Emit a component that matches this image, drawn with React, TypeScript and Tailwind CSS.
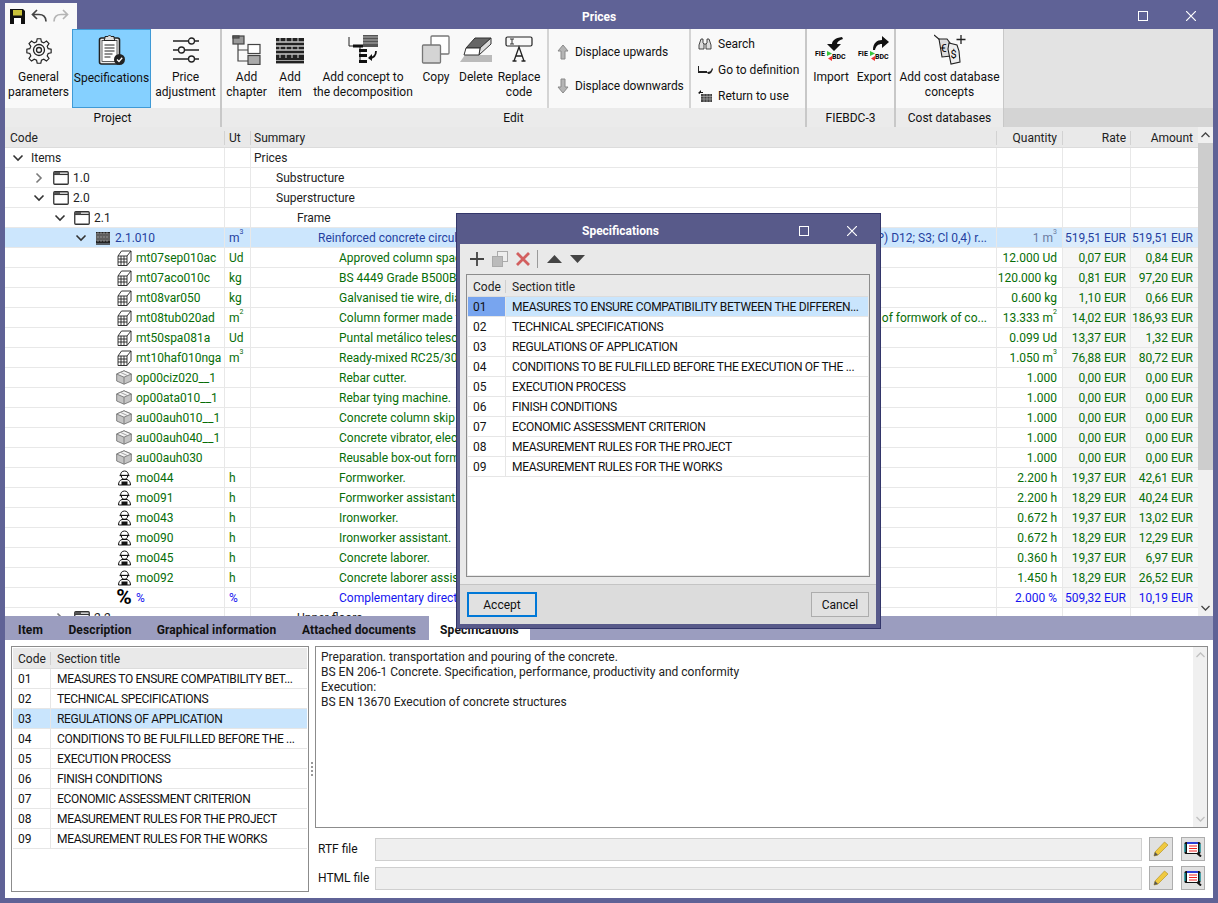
import React from 'react';

const FONT = "font-['Roboto',sans-serif]";

type Row = {
  indent: number;
  arrow?: 'down' | 'right';
  icon: 'folder' | 'wall' | 'mat' | 'box' | 'man' | 'pct' | 'none';
  code: string;
  ut?: string;
  sup?: string;
  summary: string;
  tail?: string;
  sumIndent: number;
  qty?: string;
  qtySup?: string;
  rate?: string;
  amount?: string;
  tone: 'black' | 'green' | 'blue' | 'selected';
};

const rows: Row[] = [
  { indent: 6, arrow: 'down', icon: 'none', code: 'Items', summary: 'Prices', sumIndent: 3, tone: 'black' },
  { indent: 27, arrow: 'right', icon: 'folder', code: '1.0', summary: 'Substructure', sumIndent: 25, tone: 'black' },
  { indent: 27, arrow: 'down', icon: 'folder', code: '2.0', summary: 'Superstructure', sumIndent: 25, tone: 'black' },
  { indent: 48, arrow: 'down', icon: 'folder', code: '2.1', summary: 'Frame', sumIndent: 46, tone: 'black' },
  { indent: 69, arrow: 'down', icon: 'wall', code: '2.1.010', ut: 'm', sup: '3', summary: 'Reinforced concrete circular column, made of concrete RC25/30 (XC1(', tail: 'P) D12; S3; Cl 0,4) r...', sumIndent: 67, qty: '1 m', qtySup: '3', rate: '519,51 EUR', amount: '519,51 EUR', tone: 'selected' },
  { indent: 111, icon: 'mat', code: 'mt07sep010ac', ut: 'Ud', summary: 'Approved column spacer', sumIndent: 88, qty: '12.000 Ud', rate: '0,07 EUR', amount: '0,84 EUR', tone: 'green' },
  { indent: 111, icon: 'mat', code: 'mt07aco010c', ut: 'kg', summary: 'BS 4449 Grade B500B steel', sumIndent: 88, qty: '120.000 kg', rate: '0,81 EUR', amount: '97,20 EUR', tone: 'green' },
  { indent: 111, icon: 'mat', code: 'mt08var050', ut: 'kg', summary: 'Galvanised tie wire, diameter', sumIndent: 88, qty: '0.600 kg', rate: '1,10 EUR', amount: '0,66 EUR', tone: 'green' },
  { indent: 111, icon: 'mat', code: 'mt08tub020ad', ut: 'm', sup: '2', summary: 'Column former made from disposable sheet, for the purposes', tail: 'of formwork of co...', sumIndent: 88, qty: '13.333 m', qtySup: '2', rate: '14,02 EUR', amount: '186,93 EUR', tone: 'green' },
  { indent: 111, icon: 'mat', code: 'mt50spa081a', ut: 'Ud', summary: 'Puntal metálico telescópico', sumIndent: 88, qty: '0.099 Ud', rate: '13,37 EUR', amount: '1,32 EUR', tone: 'green' },
  { indent: 111, icon: 'mat', code: 'mt10haf010nga', ut: 'm', sup: '3', summary: 'Ready-mixed RC25/30 concrete', sumIndent: 88, qty: '1.050 m', qtySup: '3', rate: '76,88 EUR', amount: '80,72 EUR', tone: 'green' },
  { indent: 111, icon: 'box', code: 'op00ciz020__1', summary: 'Rebar cutter.', sumIndent: 88, qty: '1.000', rate: '0,00 EUR', amount: '0,00 EUR', tone: 'green' },
  { indent: 111, icon: 'box', code: 'op00ata010__1', summary: 'Rebar tying machine.', sumIndent: 88, qty: '1.000', rate: '0,00 EUR', amount: '0,00 EUR', tone: 'green' },
  { indent: 111, icon: 'box', code: 'au00auh010__1', summary: 'Concrete column skip', sumIndent: 88, qty: '1.000', rate: '0,00 EUR', amount: '0,00 EUR', tone: 'green' },
  { indent: 111, icon: 'box', code: 'au00auh040__1', summary: 'Concrete vibrator, electric', sumIndent: 88, qty: '1.000', rate: '0,00 EUR', amount: '0,00 EUR', tone: 'green' },
  { indent: 111, icon: 'box', code: 'au00auh030', summary: 'Reusable box-out former', sumIndent: 88, qty: '1.000', rate: '0,00 EUR', amount: '0,00 EUR', tone: 'green' },
  { indent: 111, icon: 'man', code: 'mo044', ut: 'h', summary: 'Formworker.', sumIndent: 88, qty: '2.200 h', rate: '19,37 EUR', amount: '42,61 EUR', tone: 'green' },
  { indent: 111, icon: 'man', code: 'mo091', ut: 'h', summary: 'Formworker assistant.', sumIndent: 88, qty: '2.200 h', rate: '18,29 EUR', amount: '40,24 EUR', tone: 'green' },
  { indent: 111, icon: 'man', code: 'mo043', ut: 'h', summary: 'Ironworker.', sumIndent: 88, qty: '0.672 h', rate: '19,37 EUR', amount: '13,02 EUR', tone: 'green' },
  { indent: 111, icon: 'man', code: 'mo090', ut: 'h', summary: 'Ironworker assistant.', sumIndent: 88, qty: '0.672 h', rate: '18,29 EUR', amount: '12,29 EUR', tone: 'green' },
  { indent: 111, icon: 'man', code: 'mo045', ut: 'h', summary: 'Concrete laborer.', sumIndent: 88, qty: '0.360 h', rate: '19,37 EUR', amount: '6,97 EUR', tone: 'green' },
  { indent: 111, icon: 'man', code: 'mo092', ut: 'h', summary: 'Concrete laborer assistant.', sumIndent: 88, qty: '1.450 h', rate: '18,29 EUR', amount: '26,52 EUR', tone: 'green' },
  { indent: 111, icon: 'pct', code: '%', ut: '%', summary: 'Complementary direct costs', sumIndent: 88, qty: '2.000 %', rate: '509,32 EUR', amount: '10,19 EUR', tone: 'blue' },
  { indent: 48, arrow: 'right', icon: 'folder', code: '2.2', summary: 'Upper floors', sumIndent: 46, tone: 'black' },
];

const sections = [
  ['01', 'MEASURES TO ENSURE COMPATIBILITY BETWEEN THE DIFFEREN...', 'MEASURES TO ENSURE COMPATIBILITY BET...'],
  ['02', 'TECHNICAL SPECIFICATIONS', 'TECHNICAL SPECIFICATIONS'],
  ['03', 'REGULATIONS OF APPLICATION', 'REGULATIONS OF APPLICATION'],
  ['04', 'CONDITIONS TO BE FULFILLED BEFORE THE EXECUTION OF THE ...', 'CONDITIONS TO BE FULFILLED BEFORE THE ...'],
  ['05', 'EXECUTION PROCESS', 'EXECUTION PROCESS'],
  ['06', 'FINISH CONDITIONS', 'FINISH CONDITIONS'],
  ['07', 'ECONOMIC ASSESSMENT CRITERION', 'ECONOMIC ASSESSMENT CRITERION'],
  ['08', 'MEASUREMENT RULES FOR THE PROJECT', 'MEASUREMENT RULES FOR THE PROJECT'],
  ['09', 'MEASUREMENT RULES FOR THE WORKS', 'MEASUREMENT RULES FOR THE WORKS'],
];

const Chevron = ({ dir, light }: { dir: 'down' | 'right'; light?: boolean }) => (
  <svg width="12" height="12" viewBox="0 0 12 12" fill="none" stroke={light ? '#7a7a7a' : '#333'} strokeWidth="1.6">
    {dir === 'down' ? <path d="M1.5 3.5 6 8l4.5-4.5" /> : <path d="M3.5 1.5 8 6l-4.5 4.5" />}
  </svg>
);

const FolderIcon = () => (
  <svg width="16" height="14" viewBox="0 0 16 14" fill="none">
    <rect x="0.75" y="0.75" width="14.5" height="12.5" rx="1" fill="#fff" stroke="#333" strokeWidth="1.3" />
    <path d="M1 3.4h14" stroke="#333" strokeWidth="1.3" />
    <rect x="1" y="1" width="6" height="2.4" fill="#555" />
  </svg>
);

const WallIcon = ({ size = 14 }: { size?: number }) => (
  <svg width={size} height={size} viewBox="0 0 14 14">
    <rect x="0" y="1" width="14" height="11" fill="#222" />
    {[3, 5, 7, 9].map((y) => (
      <path key={y} d="M0 0h14" transform={`translate(0 ${y})`} stroke="#bbb" strokeWidth="0.8" />
    ))}
    {[2, 5, 8, 11].map((x) => (
      <path key={x} d={`M${x} 1v11`} stroke="#bbb" strokeWidth="0.6" strokeDasharray="2 2" />
    ))}
    <path d="M0 13h14" stroke="#222" strokeWidth="1.4" />
  </svg>
);

const MatIcon = () => (
  <svg width="15" height="16" viewBox="0 0 15 16" fill="none" stroke="#222" strokeWidth="0.9">
    <path d="M1 6h9v9.5H1zM1 6l3.5-5H14l-4 5M14 1v9.5l-4 5" fill="#fff" />
    <path d="M4 6v9.5M7 6v9.5M1 9h9M1 12h9" />
  </svg>
);

const BoxIcon = () => (
  <svg width="16" height="15" viewBox="0 0 16 15" stroke="#777" strokeWidth="0.9">
    <path d="M8 .8 15.3 4v7L8 14.2.7 11V4z" fill="#c4c4c4" />
    <path d="M.7 4 8 7.2 15.3 4 8 .8z" fill="#f3f3f3" />
    <path d="M8 7.2v7" />
    <path d="M4.5 2.4 11.5 5.6" stroke="#999" />
  </svg>
);

const ManIcon = () => (
  <svg width="15" height="16" viewBox="0 0 15 16" fill="none" stroke="#111" strokeWidth="1">
    <path d="M3.6 5.5C3.5 2.8 5 1 7.5 1s4 1.8 3.9 4.5z" fill="#fff" />
    <path d="M2.6 5.5h9.8" strokeWidth="1.3" />
    <path d="M4.4 6c0 2 1.3 3.2 3.1 3.2s3.1-1.2 3.1-3.2" fill="#fff" />
    <path d="M1.5 15c0-3 1.5-5 3.5-5.500h5c2 .5 3.500 2.500 3.500 5.500z" fill="#fff" />
    <rect x="4.500" y="11.500" width="6" height="3.500" fill="#111" stroke="none" />
  </svg>
);

const RowIcon = ({ icon }: { icon: Row['icon'] }) => {
  if (icon === 'folder') return <FolderIcon />;
  if (icon === 'wall') return <WallIcon />;
  if (icon === 'mat') return <MatIcon />;
  if (icon === 'box') return <BoxIcon />;
  if (icon === 'man') return <ManIcon />;
  if (icon === 'pct') return <span className="text-[21px] leading-none font-bold text-black">%</span>;
  return null;
};

const RibbonBtn = ({ icon, lines, width, active }: { icon: React.ReactNode; lines: string[]; width: number; active?: boolean }) => (
  <div
    className={`flex flex-col items-center h-[79px] shrink-0 ${active ? 'bg-[#85d0ff] border border-[#3f9ad6]' : ''}`}
    style={{ width }}
  >
    <div className={`h-[40px] flex items-center justify-center ${active ? 'mt-0' : 'mt-px'}`}>{icon}</div>
    <div className={`text-center leading-[15px] whitespace-nowrap text-[#111] ${active ? 'mt-px' : ''}`}>
      {lines.map((l) => (
        <div key={l}>{l}</div>
      ))}
    </div>
  </div>
);

const Group = ({ label, width, children }: { label: string; width: number; children: React.ReactNode }) => (
  <div className="flex flex-col shrink-0 border-r-2 border-[#c8c8c8]" style={{ width }}>
    <div className="h-[79px] bg-[#f9f9f9] flex overflow-hidden">{children}</div>
    <div className="h-[19px] bg-[#ebebeb] flex items-center justify-center text-[#111]">{label}</div>
  </div>
);

const GearIcon = () => (
  <svg width="28" height="28" viewBox="0 0 28 28" fill="none" stroke="#222" strokeWidth="1.3">
    <path d="M12 1.500h4l.7 3.500 2.600 1.100 3-2 2.800 2.800-2 3 1.100 2.600 3.300.7v4l-3.300.7-1.100 2.600 2 3-2.800 2.800-3-2-2.600 1.100-.7 3.300h-4l-.7-3.300-2.600-1.100-3 2-2.800-2.800 2-3-1.100-2.600-3.300-.7v-4l3.300-.7 1.100-2.600-2-3 2.800-2.800 3 2 2.600-1.100z" transform="translate(1.400 1.400) scale(.9)" />
    <circle cx="14" cy="14" r="5.500" />
    <circle cx="14" cy="14" r="2.500" />
  </svg>
);

const ClipboardIcon = () => (
  <svg width="28" height="32" viewBox="0 0 28 32" fill="none" stroke="#222">
    <rect x="1.500" y="4" width="20" height="26" rx="2" fill="#eee" strokeWidth="1.600" />
    <rect x="4" y="6.500" width="15" height="21" fill="#fff" strokeWidth="0.700" />
    <path d="M7 4V2.500h3L11.500 1 13 2.500h3V4l1 2.500H6z" fill="#ddd" strokeWidth="1" />
    <path d="M6.500 11h10M6.500 14h10M6.500 17h10M6.500 20h8M6.500 23h6" strokeWidth="1" />
    <circle cx="21.500" cy="25.500" r="5.500" fill="#222" stroke="none" />
    <path d="m19 25.500 2 2 3.200-3.700" stroke="#fff" strokeWidth="1.300" />
  </svg>
);

const SlidersIcon = () => (
  <svg width="28" height="26" viewBox="0 0 28 26" fill="none" stroke="#222" strokeWidth="1.300">
    <path d="M1 4h15M23 4h4M1 13h5M13 13h14M1 22h15M23 22h4" />
    <circle cx="19.500" cy="4" r="3" />
    <circle cx="9.500" cy="13" r="3" />
    <circle cx="19.500" cy="22" r="3" />
  </svg>
);

const ChapterIcon = () => (
  <svg width="30" height="30" viewBox="0 0 30 30" stroke="#444" strokeWidth="1.200" fill="none">
    <rect x="1" y="1" width="11" height="8" fill="#999" />
    <rect x="1" y="1" width="6" height="2" fill="#666" />
    <path d="M6 9v17h10M6 15h10" />
    <rect x="16" y="9.500" width="12" height="9" fill="#fff" />
    <rect x="16" y="20.500" width="12" height="9" fill="#aaa" />
  </svg>
);

const DecompIcon = () => (
  <svg width="32" height="30" viewBox="0 0 32 30" fill="none">
    <rect x="16" y="0" width="15" height="12" fill="#555" />
    {[2, 5, 8].map((y) => <path key={y} d={`M16 ${y}h15`} stroke="#ccc" strokeWidth="0.800" />)}
    <path d="M2 2v9h6M13 11v17" stroke="#222" strokeWidth="1" />
    <rect x="6" y="9.500" width="10" height="3" fill="#111" />
    <path d="M13 16h3M13 21h3M13 27h3" stroke="#222" />
    <rect x="12" y="14" width="8" height="3" fill="#111" />
    <rect x="12" y="19" width="8" height="3" fill="#111" />
    <rect x="12" y="25" width="8" height="3" fill="#111" />
    <path d="M29 16c0 5-3 7-7 7" stroke="#111" strokeWidth="1.800" />
    <path d="m25 19-4 4 4 3z" fill="#111" />
  </svg>
);

const CopyIcon = () => (
  <svg width="30" height="30" viewBox="0 0 30 30" stroke="#777" strokeWidth="1.300">
    <rect x="10" y="1" width="18" height="18" rx="1" fill="#fff" />
    <rect x="1.500" y="10" width="18" height="18" rx="1" fill="#d4d4d4" />
  </svg>
);

const EraserIcon = () => (
  <svg width="33" height="26" viewBox="0 0 33 26" stroke="#333" strokeWidth="1">
    <path d="M0 25l5-7h27v7z" fill="#bbb" stroke="none" />
    <path d="M6 11 15 1h16L20 11z" fill="#666" />
    <path d="M20 11 31 1v6L19 18z" fill="#ddd" />
    <path d="M6 11h14l-1 7H4z" fill="#fff" />
  </svg>
);

const ReplaceIcon = () => (
  <svg width="28" height="30" viewBox="0 0 28 30" fill="none" stroke="#222">
    <rect x="1" y="2" width="26" height="9" rx="1.500" strokeWidth="1.200" />
    <path d="M5 4h4M5 9h4M7 4v5" strokeWidth="0.900" />
    <path d="m9 26 5-14 5 14M11 21h6M7.500 26h4M16.500 26h4" strokeWidth="1.300" />
  </svg>
);

const FieIcon = ({ up }: { up?: boolean }) => (
  <div className="relative w-[32px] h-[26px]">
    <svg className="absolute left-0 top-0 overflow-visible" width="32" height="26" viewBox="0 0 32 26">
      {up ? (
        <path d="M15 13C15 6 19 3 24 3V-1l7 6-7 6V7c-4 0-6 2-7 6z" fill="#111" />
      ) : (
        <path d="M27 0C20 1 17 4 17 7h-5l7 7 7-7h-4c0-2 2-4 6-5z" fill="#111" />
      )}
      <path d="M12 14l5 2.500-5 2.500z" fill="#39c43c" />
      <path d="M17 19l-4 2.500 4 2.500z" fill="#e33" />
    </svg>
    <span className="absolute left-0 top-[14px] text-[7px] leading-[7px] font-bold text-black">FIE</span>
    <span className="absolute left-[17px] top-[17px] text-[7px] leading-[7px] font-bold text-black">BDC</span>
  </div>
);

const TagsIcon = () => (
  <div className="relative w-[32px] h-[32px]">
    <svg className="absolute left-0 top-0" width="32" height="32" viewBox="0 0 32 32" fill="#fff" stroke="#222" strokeWidth="1.100">
      <path d="M0 1l6 5" />
      <path d="M5 5h8l3 4 1 13-9 1z" fill="#ddd" />
      <path d="M15 9l8 2 2 6 1 11-9 2-3-15z" fill="#eee" />
      <path d="M27 1v9M22.500 5.500h9" strokeWidth="1.300" />
    </svg>
    <span className="absolute left-[7px] top-[9px] text-[11px] leading-none text-black">€</span>
    <span className="absolute left-[17px] top-[15px] text-[11px] leading-none text-black">$</span>
  </div>
);

const SmallArrow = ({ down }: { down?: boolean }) => (
  <svg width="12" height="16" viewBox="0 0 12 16" fill="#b5b5b5" stroke="#8a8a8a">
    {down ? <path d="M4 1h4v8h3l-5 6-5-6h3z" /> : <path d="M4 15h4V7h3L6 1 1 7h3z" />}
  </svg>
);

const Binoculars = () => (
  <svg width="14" height="13" viewBox="0 0 14 13" fill="#ddd" stroke="#333" strokeWidth="0.900">
    <path d="M3 1h2v4l1 1v5H1V7z" />
    <path d="M11 1H9v4L8 6v5h5V7z" />
    <path d="M6 6h2" />
  </svg>
);

const GoDef = () => (
  <svg width="15" height="8" viewBox="0 0 15 8" fill="#222">
    <path d="M0 0h1v5h8v2H0z" />
    <path d="M9 6c3 0 4-1 5-4l1 1c-1 3-2 5-5 5z" />
  </svg>
);

const ReturnUse = () => (
  <svg width="14" height="14" viewBox="0 0 14 14" fill="none">
    <path d="M0 4 3 1v2h2v1H2v1z" fill="#111" />
    <rect x="3" y="5" width="11" height="8" fill="#444" />
    <path d="M3 7.500h11M3 10h11M6 5v8M9 5v8M12 5v8" stroke="#bbb" strokeWidth="0.600" />
  </svg>
);

const toneClass = {
  black: 'text-[#222]',
  green: 'text-[#076d07]',
  blue: 'text-[#1414f0]',
  selected: 'text-[#243f9f]',
};

const SectionTable = ({ which }: { which: 1 | 2 }) => (
  <div className="flex flex-col flex-1 min-w-0 overflow-hidden bg-white">
    <div className="flex h-[21px] pt-px bg-[#e9e9e9] items-center border-b border-[#dcdcdc] shrink-0 text-[#222]">
      <div className="w-[38px] pl-[5px] shrink-0 border-r border-[#cfcfcf] h-[13px] flex items-center">Code</div>
      <div className="pl-[6px]">Section title</div>
    </div>
    {sections.map((s, i) => {
      const selDialog = which === 1 && i === 0;
      const selPane = which === 2 && i === 2;
      return (
        <div key={s[0]} className={`flex h-[20px] border-b border-[#e6e6e6] items-center shrink-0 text-[#111] ${selDialog || selPane ? 'bg-[#c9e5fd]' : ''}`}>
          <div className={`w-[38px] shrink-0 h-full flex items-center pl-[5px] border-r border-[#e6e6e6] ${selDialog ? 'bg-[#78a5ef]' : ''}`}>{s[0]}</div>
          <div className="pl-[6px] whitespace-nowrap tracking-[-0.32px]">{which === 1 ? s[1] : s[2]}</div>
        </div>
      );
    })}
  </div>
);

const PencilBtn = () => (
  <div className="w-[24px] h-[24px] bg-[#e1e1e1] border border-[#adadad] flex items-center justify-center shrink-0">
    <svg width="16" height="16" viewBox="0 0 16 16">
      <path d="M11.500 1 15 4 5 14l-4 1 1-4z" fill="#f0c93f" stroke="#b8962b" strokeWidth="0.700" />
      <path d="M2 11l3 3-4 1z" fill="#555" />
    </svg>
  </div>
);

const ViewBtn = () => (
  <div className="w-[24px] h-[24px] bg-[#e1e1e1] border border-[#adadad] flex items-center justify-center shrink-0">
    <svg width="18" height="16" viewBox="0 0 18 16">
      <rect x="0.500" y="1" width="16" height="12" rx="1.500" fill="#111" />
      <rect x="3" y="1" width="11" height="2" fill="#2a3fd6" />
      <rect x="3" y="3" width="11" height="9" fill="#fff" />
      <path d="M5 5h8M5 7.500h8M5 10h8" stroke="#e22" strokeWidth="1" />
      <path d="M1 3v8M16 3v8" stroke="#18c8d8" strokeWidth="1" />
      <path d="m13 12 4 3.500" stroke="#111" strokeWidth="2" />
    </svg>
  </div>
);

export default function App() {
  return (
    <div className={`${FONT} w-[1218px] h-[903px] bg-[#5f6296] text-[12px] flex flex-col overflow-hidden relative`}>
      {/* Title bar */}
      <div className="h-[29px] shrink-0 flex items-center relative">
        <div className="ml-[5px] mt-[3px] h-[26px] w-[72px] bg-[#f9f9f9] flex items-center pl-[5px] gap-[6px]">
          <svg width="15" height="15" viewBox="0 0 15 15">
            <path d="M0 0h13l2 2v13H0z" fill="#111" />
            <rect x="3" y="1" width="9" height="5.500" fill="#c9c23a" />
            <rect x="4" y="9" width="7" height="6" fill="#fff" />
          </svg>
          <svg width="16" height="14" viewBox="0 0 16 14" fill="none" stroke="#444" strokeWidth="1.700">
            <path d="M15 12.500c0-5-3-7-7-7H2M6 1 1.500 5.500 6 10" />
          </svg>
          <svg width="16" height="14" viewBox="0 0 16 14" fill="none" stroke="#b5b5b5" strokeWidth="1.700">
            <path d="M1 12.500c0-5 3-7 7-7h6M10 1l4.500 4.500L10 10" />
          </svg>
        </div>
        <div className="absolute left-[582px] top-[8px] text-white font-bold">Prices</div>
        <div className="absolute left-[1138px] top-[11px] w-[10px] h-[10px] border border-white" />
        <svg className="absolute left-[1186px] top-[11px]" width="10" height="10" viewBox="0 0 10 10" stroke="#fff" strokeWidth="1.200">
          <path d="M0 0l10 10M10 0 0 10" />
        </svg>
      </div>

      {/* Ribbon */}
      <div className="mx-[5px] h-[98px] flex shrink-0 bg-[#e3e3e3]">
        <Group label="Project" width={217}>
          <RibbonBtn width={67} lines={['General', 'parameters']} icon={<GearIcon />} />
          <RibbonBtn width={79} active lines={['Specifications']} icon={<ClipboardIcon />} />
          <RibbonBtn width={69} lines={['Price', 'adjustment']} icon={<SlidersIcon />} />
        </Group>
        <div className="flex flex-col shrink-0 w-[585px] border-r-2 border-[#c8c8c8]">
          <div className="h-[79px] bg-[#f9f9f9] flex">
            <RibbonBtn width={49} lines={['Add', 'chapter']} icon={<ChapterIcon />} />
            <RibbonBtn width={38} lines={['Add', 'item']} icon={<WallIcon size={28} />} />
            <RibbonBtn width={108} lines={['Add concept to', 'the decomposition']} icon={<DecompIcon />} />
            <RibbonBtn width={38} lines={['Copy']} icon={<CopyIcon />} />
            <RibbonBtn width={42} lines={['Delete']} icon={<EraserIcon />} />
            <RibbonBtn width={44} lines={['Replace', 'code']} icon={<ReplaceIcon />} />
            <div className="w-[144px] border-x-2 border-[#d4d4d4] ml-[6px] flex flex-col pl-[8px] pt-[15px] gap-[18px] text-[#111] shrink-0 whitespace-nowrap tracking-[-0.1px]">
              <div className="flex items-center gap-[6px] h-[16px]"><SmallArrow />Displace upwards</div>
              <div className="flex items-center gap-[6px] h-[16px]"><SmallArrow down />Displace downwards</div>
            </div>
            <div className="flex flex-col pl-[7px] pt-[6px] text-[#111] gap-[8px]">
              <div className="flex items-center gap-[6px] h-[18px]"><Binoculars />Search</div>
              <div className="flex items-center gap-[5px] h-[18px] whitespace-nowrap"><GoDef />Go to definition</div>
              <div className="flex items-center gap-[6px] h-[17px]"><ReturnUse />Return to use</div>
            </div>
          </div>
          <div className="h-[19px] bg-[#ebebeb] flex items-center justify-center text-[#111]">Edit</div>
        </div>
        <Group label="FIEBDC-3" width={89}>
          <RibbonBtn width={48} lines={['Import']} icon={<FieIcon />} />
          <RibbonBtn width={38} lines={['Export']} icon={<FieIcon up />} />
        </Group>
        <div className="flex flex-col shrink-0 w-[107px]">
          <div className="h-[79px] bg-[#f9f9f9] flex justify-center">
            <RibbonBtn width={105} lines={['Add cost database', 'concepts']} icon={<TagsIcon />} />
          </div>
          <div className="h-[19px] bg-[#ebebeb] flex items-center justify-center text-[#111]">Cost databases</div>
        </div>
        <div className="flex-1 flex flex-col border-l border-[#c8c8c8]">
          <div className="h-[79px] bg-[#e3e3e3]" />
          <div className="h-[19px] bg-[#d4d4d4]" />
        </div>
      </div>

      {/* Price table */}
      <div className="mx-[5px] h-[489px] flex shrink-0 bg-white">
        <div className="w-[1193px] flex flex-col overflow-hidden">
          <div className="h-[21px] pt-px flex items-center bg-[#e9e9e9] border-b border-[#dcdcdc] shrink-0 text-[#222]">
            <div className="w-[219px] pl-[5px] shrink-0">Code</div>
            <div className="w-[26px] pl-[4px] border-l border-[#d2d2d2] shrink-0 h-[14px] flex items-center">Ut</div>
            <div className="w-[746px] pl-[3px] border-l border-[#d2d2d2] shrink-0 h-[14px] flex items-center">Summary</div>
            <div className="w-[66px] pr-[5px] text-right border-l border-[#d2d2d2] shrink-0 h-[14px] leading-[14px]">Quantity</div>
            <div className="w-[68px] pr-[4px] text-right border-l border-[#d2d2d2] shrink-0 h-[14px] leading-[14px]">Rate</div>
            <div className="w-[68px] pr-[5px] text-right border-l border-[#d2d2d2] shrink-0 h-[14px] leading-[14px]">Amount</div>
          </div>
          {rows.map((r) => {
            const sel = r.tone === 'selected';
            return (
              <div key={r.code} className={`flex h-[20px] shrink-0 border-b border-[#e8e8e8] items-center ${toneClass[r.tone]} ${sel ? 'bg-[#cce6fd]' : ''}`}>
                <div className="w-[219px] shrink-0 h-full flex items-center relative whitespace-nowrap" style={{ paddingLeft: r.indent }}>
                  {r.arrow && (
                    <span className="w-[14px] mr-[7px] flex justify-center shrink-0">
                      <Chevron dir={r.arrow} light={r.arrow === 'right'} />
                    </span>
                  )}
                  {r.icon !== 'none' && <span className="w-[16px] flex justify-center items-center shrink-0 mr-[4px]"><RowIcon icon={r.icon} /></span>}
                  <span className={r.code === 'Items' ? 'ml-[-1px]' : ''}>{r.code}</span>
                </div>
                <div className="w-[26px] pl-[4px] border-l border-[#e8e8e8] h-full flex items-center shrink-0">
                  {r.ut}{r.sup && <sup className="text-[7px] leading-none -mt-[3px]">{r.sup}</sup>}
                </div>
                <div className="w-[746px] border-l border-[#e8e8e8] h-full flex items-center justify-between pr-[9px] shrink-0 whitespace-nowrap overflow-hidden" style={{ paddingLeft: r.sumIndent }}>
                  <span>{r.summary}</span>
                  {r.tail && <span>{r.tail}</span>}
                </div>
                <div className={`w-[66px] pr-[5px] border-l border-[#e8e8e8] h-full flex items-center justify-end shrink-0 whitespace-nowrap ${sel ? 'text-[#6a7aa0]' : ''}`}>
                  {r.qty}{r.qtySup && <sup className="text-[7px] leading-none -mt-[3px]">{r.qtySup}</sup>}
                </div>
                <div className={`w-[68px] pr-[4px] border-l border-[#e8e8e8] h-full flex items-center justify-end shrink-0 whitespace-nowrap ${sel ? 'bg-[#dcecfb]' : r.rate ? 'bg-[#f6f6f6]' : ''}`}>{r.rate}</div>
                <div className={`w-[68px] pr-[5px] border-l border-[#e8e8e8] h-full flex items-center justify-end shrink-0 whitespace-nowrap ${sel ? 'bg-[#dcecfb]' : r.amount ? 'bg-[#f6f6f6]' : ''}`}>{r.amount}</div>
              </div>
            );
          })}
        </div>
        <div className="w-[15px] bg-[#f0f0f0] flex flex-col shrink-0">
          <div className="h-[16px] flex items-center justify-center shrink-0">
            <svg width="9" height="6" viewBox="0 0 9 6" fill="none" stroke="#444" strokeWidth="1.300"><path d="m.5 5 4-4 4 4" /></svg>
          </div>
          <div className="h-[327px] bg-[#cdcdcd]" />
          <div className="flex-1" />
          <div className="h-[16px] flex items-center justify-center shrink-0">
            <svg width="9" height="6" viewBox="0 0 9 6" fill="none" stroke="#444" strokeWidth="1.300"><path d="m.5 1 4 4 4-4" /></svg>
          </div>
        </div>
      </div>

      {/* Tabs */}
      <div className="mx-[5px] h-[24px] shrink-0 bg-[#9b9dbf] flex font-bold text-[#111] whitespace-nowrap tracking-[0.12px] text-center">
        <div className="w-[51px] pt-[7px] leading-[14px]">Item</div>
        <div className="w-[88px] pt-[7px] leading-[14px]">Description</div>
        <div className="w-[145px] pt-[7px] leading-[14px]">Graphical information</div>
        <div className="w-[140px] pt-[7px] leading-[14px]">Attached documents</div>
        <div className="w-[101px] pt-[7px] leading-[14px] bg-white">Specifications</div>
      </div>

      {/* Bottom pane */}
      <div className="mx-[5px] h-[258px] shrink-0 bg-white flex pt-[6px] pl-[6px] pr-[5px] pb-[6px]">
        <div className="w-[298px] h-[246px] border border-[#8c8c8c] flex p-[1px] shrink-0">
          <SectionTable which={2} />
        </div>
        <div className="w-[6px] shrink-0 flex items-center justify-center">
          <div className="w-[2px] h-[14px] border-l-2 border-dotted border-[#999]" />
        </div>
        <div className="flex-1 flex flex-col">
          <div className="h-[182px] border border-[#8c8c8c] flex shrink-0">
            <div className="flex-1 pl-[5px] pt-[3px] leading-[15px] text-[#222]">
              <div>Preparation. transportation and pouring of the concrete.</div>
              <div>BS EN 206-1 Concrete. Specification, performance, productivity and conformity</div>
              <div>Execution:</div>
              <div>BS EN 13670 Execution of concrete structures</div>
            </div>
            <div className="w-[14px] bg-[#f0f0f0] flex flex-col justify-between items-center py-[5px]">
              <svg width="9" height="6" viewBox="0 0 9 6" fill="none" stroke="#c0c0c0" strokeWidth="1.300"><path d="m.5 5 4-4 4 4" /></svg>
              <svg width="9" height="6" viewBox="0 0 9 6" fill="none" stroke="#c0c0c0" strokeWidth="1.300"><path d="m.5 1 4 4 4-4" /></svg>
            </div>
          </div>
          <div className="flex items-center h-[24px] mt-[9px] pr-[3px] text-[#111]">
            <div className="w-[60px] pl-[3px] shrink-0">RTF file</div>
            <div className="flex-1 h-[23px] bg-[#efefef] border border-[#cfcfcf]" />
            <div className="ml-[7px] mr-[8px]"><PencilBtn /></div>
            <ViewBtn />
          </div>
          <div className="flex items-center h-[24px] mt-[5px] pr-[3px] text-[#111]">
            <div className="w-[60px] pl-[3px] shrink-0">HTML file</div>
            <div className="flex-1 h-[23px] bg-[#efefef] border border-[#cfcfcf]" />
            <div className="ml-[7px] mr-[8px]"><PencilBtn /></div>
            <ViewBtn />
          </div>
        </div>
      </div>

      {/* Specifications dialog */}
      <div className="absolute left-[456px] top-[213px] w-[425px] h-[416px] bg-[#585a8a] border border-[#33366a] flex flex-col pl-[3px] pr-[4px] pb-[4px]">
        <div className="h-[30px] shrink-0 relative text-white font-bold">
          <div className="absolute left-[122px] top-[10px] leading-[14px]">Specifications</div>
          <div className="absolute left-[339px] top-[12px] w-[10px] h-[10px] border border-white" />
          <svg className="absolute left-[387px] top-[12px]" width="10" height="10" viewBox="0 0 10 10" stroke="#fff" strokeWidth="1.200"><path d="M0 0l10 10M10 0 0 10" /></svg>
        </div>
        <div className="flex-1 bg-[#e9e9e9] flex flex-col">
          <div className="h-[30px] shrink-0 flex items-center pl-[10px]">
            <svg width="14" height="14" viewBox="0 0 14 14" stroke="#444" strokeWidth="1.800"><path d="M7 0v14M0 7h14" /></svg>
            <svg className="ml-[8px]" width="16" height="16" viewBox="0 0 16 16" stroke="#aaa"><rect x="5.500" y="0.500" width="10" height="10" fill="#eee" /><rect x="0.500" y="5.500" width="10" height="10" fill="#bbb" /></svg>
            <svg className="ml-[8px]" width="14" height="14" viewBox="0 0 14 14" stroke="#d25f5f" strokeWidth="2.800"><path d="m1 1 12 12M13 1 1 13" /></svg>
            <div className="w-px h-[18px] bg-[#9a9a9a] ml-[7px]" />
            <svg className="ml-[9px]" width="15" height="8" viewBox="0 0 15 8" fill="#444"><path d="M7.500 0 15 8H0z" /></svg>
            <svg className="ml-[8px]" width="15" height="8" viewBox="0 0 15 8" fill="#444"><path d="M0 0h15L7.500 8z" /></svg>
          </div>
          <div className="mx-[6px] h-[303px] border border-[#8c8c8c] flex p-[1px] shrink-0">
            <SectionTable which={1} />
          </div>
          <div className="mt-[7px] flex-1 border-t border-[#c4c4c4] bg-[#dcdcdc] flex items-center justify-between px-[7px]">
            <div className="w-[70px] h-[25px] border-2 border-[#0078d7] bg-[#e1e1e1] flex items-center justify-center text-[#111]">Accept</div>
            <div className="w-[58px] h-[25px] border border-[#adadad] bg-[#e1e1e1] flex items-center justify-center text-[#111]">Cancel</div>
          </div>
        </div>
      </div>
    </div>
  );
}
